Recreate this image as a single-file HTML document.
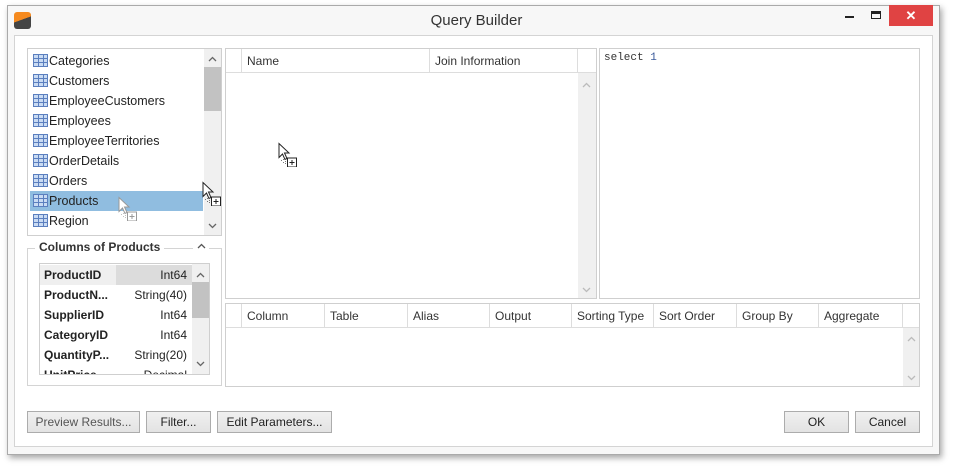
<!DOCTYPE html><html><head><style>
*{box-sizing:border-box;margin:0;padding:0}
body{width:953px;height:467px;background:#fff;font-family:"Liberation Sans",sans-serif;font-size:12px;color:#222;position:relative;overflow:hidden}
.a{position:absolute}
.win{left:7px;top:5px;width:933px;height:450px;background:#f7f7f7;border:1px solid #aaa;box-shadow:2px 3px 6px rgba(0,0,0,.35)}
.b{border:1px solid #cfcfcf;background:#fff}
.row{position:absolute;left:2px;height:20px;width:173px;line-height:20px;padding-left:19px;font-size:12.5px}
.ic{position:absolute;left:3px;top:3px;width:15px;height:13px;border:1px solid #5b7fbf;background:
linear-gradient(#5b7fbf,#5b7fbf) 0 3px/100% 1px no-repeat,
linear-gradient(#5b7fbf,#5b7fbf) 0 7px/100% 1px no-repeat,
linear-gradient(#5b7fbf,#5b7fbf) 4px 0/1px 100% no-repeat,
linear-gradient(#5b7fbf,#5b7fbf) 9px 0/1px 100% no-repeat,#c9dbf3}
.hd{position:absolute;top:0;height:24px;line-height:24px;border-right:1px solid #ddd;padding-left:5px;font-size:12px;color:#333}
.btn{position:absolute;top:411px;height:22px;border:1px solid #acacac;background:linear-gradient(#f0f0f0,#e3e3e3);text-align:center;line-height:20px;font-size:12px;color:#222}
.cr{position:absolute;font-size:12px;color:#222;line-height:20px}
.sb{position:absolute;background:#f0f0f0}
.ar{position:absolute}
</style></head><body>
<svg width="0" height="0" style="position:absolute"><defs>
<symbol id="up" viewBox="0 0 9 6"><path d="M1 5L4.5 1.5L8 5" fill="none" stroke="currentColor" stroke-width="1.3"/></symbol>
<symbol id="dn" viewBox="0 0 9 6"><path d="M1 1L4.5 4.5L8 1" fill="none" stroke="currentColor" stroke-width="1.3"/></symbol>
<symbol id="cur" viewBox="0 0 20 24"><path d="M1 1V15L4.5 11.5L7 17L9 16L6.5 10.5H11Z" fill="#fff" stroke="currentColor"/><path d="M5 17h1M7 19h1M5 20h1M9 18h1M3 18h1M7 21h1" stroke="currentColor" opacity=".6"/><rect x="9.5" y="15.5" width="9" height="9" fill="#fff" stroke="currentColor"/><path d="M14 17.5v5M11.5 20h5" stroke="currentColor"/></symbol>
</defs></svg>
<div class="a win"></div>
<div class="a" style="left:14px;top:12px;width:17px;height:17px;border-radius:3px;background:linear-gradient(160deg,#f58a1f 45%,#444 46%)"></div>
<div class="a" style="left:0;width:953px;top:12px;text-align:center;font-size:15px;color:#333">Query Builder</div>
<div class="a" style="left:845px;top:16px;width:9px;height:2px;background:#222"></div>
<div class="a" style="left:871px;top:11px;width:10px;height:8px;border:1px solid #222;border-top-width:3px"></div>
<div class="a" style="left:889px;top:5px;width:44px;height:21px;background:#e04343;color:#fff;text-align:center;font-size:13px;font-weight:bold;line-height:21px">✕</div>
<div class="a" style="left:14px;top:35px;width:919px;height:412px;border:1px solid #d4d4d4;background:#fff"></div>

<div class="a b" style="left:27px;top:48px;width:195px;height:188px;overflow:hidden">
<div class="row" style="top:2px"><i class="ic"></i>Categories</div>
<div class="row" style="top:22px"><i class="ic"></i>Customers</div>
<div class="row" style="top:42px"><i class="ic"></i>EmployeeCustomers</div>
<div class="row" style="top:62px"><i class="ic"></i>Employees</div>
<div class="row" style="top:82px"><i class="ic"></i>EmployeeTerritories</div>
<div class="row" style="top:102px"><i class="ic"></i>OrderDetails</div>
<div class="row" style="top:122px"><i class="ic"></i>Orders</div>
<div class="row" style="top:142px;background:#90bde0"><i class="ic"></i>Products</div>
<div class="row" style="top:162px"><i class="ic"></i>Region</div>
<div class="sb" style="left:176px;top:0;width:17px;height:186px"></div>
<div class="sb" style="left:176px;top:18px;width:17px;height:44px;background:#c2c2c2"></div>
<svg class="ar" style="left:180px;top:7px;color:#666" width="9" height="6"><use href="#up"/></svg>
<svg class="ar" style="left:180px;top:174px;color:#666" width="9" height="6"><use href="#dn"/></svg>
</div>

<div class="a" style="left:27px;top:248px;width:195px;height:138px;border:1px solid #d4d4d4"></div>
<div class="a" style="left:35px;top:240px;padding:0 4px;background:#fff;font-weight:bold;font-size:12px;color:#333">Columns of Products</div>
<div class="a" style="left:193px;top:240px;width:16px;height:14px;background:#fff"></div>
<svg class="a" style="left:197px;top:243px;color:#555" width="9" height="6"><use href="#up"/></svg>
<div class="a b" style="left:39px;top:263px;width:171px;height:112px;overflow:hidden">
<div class="a" style="left:76px;top:1px;width:76px;height:20px;background:#dcdcdc"></div>
<div class="a" style="left:0;top:1px;width:76px;height:20px;background:#efefef"></div>
<div class="cr" style="left:4px;top:1px;font-weight:bold">ProductID</div><div class="cr" style="right:22px;top:1px">Int64</div>
<div class="cr" style="left:4px;top:21px;font-weight:bold">ProductN...</div><div class="cr" style="right:22px;top:21px">String(40)</div>
<div class="cr" style="left:4px;top:41px;font-weight:bold">SupplierID</div><div class="cr" style="right:22px;top:41px">Int64</div>
<div class="cr" style="left:4px;top:61px;font-weight:bold">CategoryID</div><div class="cr" style="right:22px;top:61px">Int64</div>
<div class="cr" style="left:4px;top:81px;font-weight:bold">QuantityP...</div><div class="cr" style="right:22px;top:81px">String(20)</div>
<div class="cr" style="left:4px;top:101px;font-weight:bold">UnitPrice</div><div class="cr" style="right:22px;top:101px">Decimal</div>
<div class="sb" style="left:152px;top:0;width:17px;height:110px"></div>
<div class="sb" style="left:152px;top:18px;width:17px;height:36px;background:#c2c2c2"></div>
<svg class="ar" style="left:156px;top:8px;color:#666" width="9" height="6"><use href="#up"/></svg>
<svg class="ar" style="left:156px;top:97px;color:#666" width="9" height="6"><use href="#dn"/></svg>
</div>

<div class="a b" style="left:225px;top:48px;width:372px;height:251px">
<div class="a" style="left:0;top:0;width:370px;height:24px;border-bottom:1px solid #ddd"></div>
<div class="hd" style="left:0;width:16px"></div>
<div class="hd" style="left:16px;width:188px">Name</div>
<div class="hd" style="left:204px;width:148px">Join Information</div>
<div class="sb" style="left:352px;top:24px;width:18px;height:225px"></div>
<svg class="ar" style="left:356px;top:33px;color:#bbb" width="9" height="6"><use href="#up"/></svg>
<svg class="ar" style="left:356px;top:238px;color:#bbb" width="9" height="6"><use href="#dn"/></svg>
</div>
<div class="a b" style="left:599px;top:48px;width:321px;height:251px;font-family:'Liberation Mono',monospace;font-size:11px;padding:3px 4px;color:#333">select <span style="color:#3a5a9a">1</span></div>
<div class="a b" style="left:225px;top:303px;width:695px;height:84px">
<div class="a" style="left:0;top:0;width:693px;height:24px;border-bottom:1px solid #ddd"></div>
<div class="hd" style="left:0;width:16px"></div>
<div class="hd" style="left:16px;width:83px">Column</div>
<div class="hd" style="left:99px;width:83px">Table</div>
<div class="hd" style="left:182px;width:82px">Alias</div>
<div class="hd" style="left:264px;width:82px">Output</div>
<div class="hd" style="left:346px;width:82px">Sorting Type</div>
<div class="hd" style="left:428px;width:83px">Sort Order</div>
<div class="hd" style="left:511px;width:82px">Group By</div>
<div class="hd" style="left:593px;width:84px">Aggregate</div>
<div class="sb" style="left:677px;top:24px;width:16px;height:58px"></div>
<svg class="ar" style="left:681px;top:32px;color:#bbb" width="9" height="6"><use href="#up"/></svg>
<svg class="ar" style="left:681px;top:71px;color:#bbb" width="9" height="6"><use href="#dn"/></svg>
</div>
<div class="btn" style="left:27px;width:113px;color:#555">Preview Results...</div>
<div class="btn" style="left:146px;width:65px">Filter...</div>
<div class="btn" style="left:217px;width:115px">Edit Parameters...</div>
<div class="btn" style="left:784px;width:65px">OK</div>
<div class="btn" style="left:855px;width:65px">Cancel</div>
<svg class="a" style="left:118px;top:196px;color:#999" width="20" height="25"><use href="#cur"/></svg>
<svg class="a" style="left:202px;top:181px;color:#222" width="20" height="25"><use href="#cur"/></svg>
<svg class="a" style="left:278px;top:142px;color:#222" width="20" height="25"><use href="#cur"/></svg>
</body></html>
